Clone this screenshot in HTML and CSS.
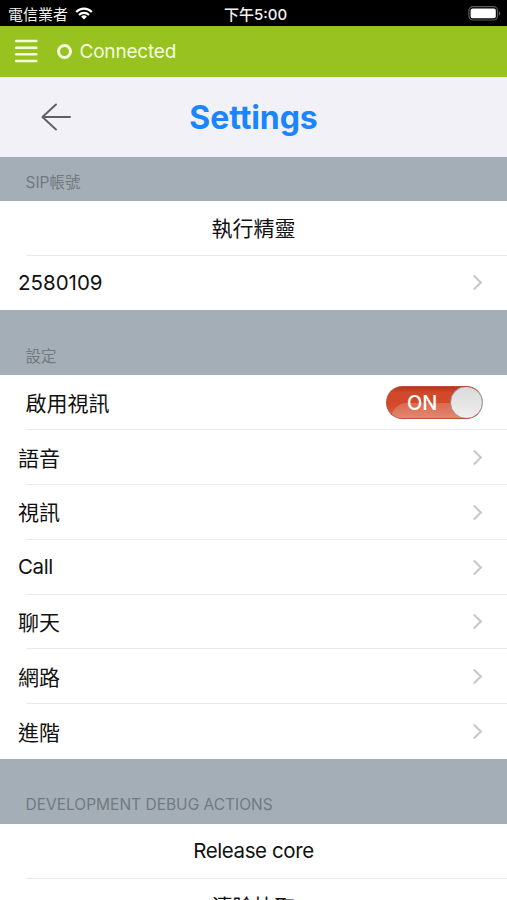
FILE: index.html
```html
<!DOCTYPE html>
<html lang="zh-Hant">
<head>
	<meta charset="UTF-8">
	<meta name="viewport" content="width=device-width, initial-scale=1">
	<title>Settings</title>

	<link rel="stylesheet" href="styles.css">
</head>
<body>

<div class="status-bar">
	<div class="carrier">
		<span>電信業者</span>
		<svg class="wifi" width="18" height="13" viewBox="0 0 18 13">
			<path d="M1.2 4.9a11 11 0 0 1 15.6 0M4 7.9a7.1 7.1 0 0 1 10 0" fill="none" stroke="#fff" stroke-width="2.1"/>
			<path d="M9 12.6 6.1 9.8a4.1 4.1 0 0 1 5.8 0z" fill="#fff"/>
		</svg>
	</div>
	<div class="time">下午5:00</div>
	<svg class="battery" width="33" height="15" viewBox="0 0 33 15">
		<rect x=".9" y=".7" width="28.6" height="13.3" rx="4" fill="none" stroke="#5b5b5d" stroke-width="1.2"/>
		<rect x="2.6" y="2.4" width="25.2" height="9.9" rx="2" fill="#fff"/>
		<path d="M30.8 5.2q1.4.5 1.4 2.2t-1.4 2.2z" fill="#5b5b5d"/>
	</svg>
</div>

<div class="top-bar">
	<svg class="menu" width="24" height="24" viewBox="0 0 24 24">
		<path d="M2 2h20.4M2 8.7h20.4M2 15.3h20.4M2 22h20.4" stroke="#f4ffdc" stroke-width="2.4" stroke-linecap="round"/>
	</svg>
	<span class="led"></span>
	<span class="state">Connected</span>
</div>

<div class="title-bar">
	<svg class="back" width="32" height="28" viewBox="0 0 32 28">
		<path d="M15 1.5 1.4 14 15 26.5M1.6 14h27.4" fill="none" stroke="#606062" stroke-width="1.9" stroke-linecap="round" stroke-linejoin="round"/>
	</svg>
	<h1>Settings</h1>
</div>

<div class="section-head first"><span>SIP帳號</span></div>
<div class="list">
	<div class="row center zh">執行精靈</div>
	<div class="row link"><span>2580109</span><i class="chevron"></i></div>
</div>

<div class="section-head"><span>設定</span></div>
<div class="list">
	<div class="row">
		<span class="zh">啟用視訊</span>
		<div class="switch">
			<span class="switch-label">ON</span>
			<span class="knob"></span>
		</div>
	</div>
	<div class="row link"><span class="zh">語音</span><i class="chevron"></i></div>
	<div class="row link"><span class="zh">視訊</span><i class="chevron"></i></div>
	<div class="row link"><span class="en">Call</span><i class="chevron"></i></div>
	<div class="row link"><span class="zh">聊天</span><i class="chevron"></i></div>
	<div class="row link"><span class="zh">網路</span><i class="chevron"></i></div>
	<div class="row link"><span class="zh">進階</span><i class="chevron"></i></div>
</div>

<div class="section-head debug"><span>DEVELOPMENT DEBUG ACTIONS</span></div>
<div class="list">
	<div class="row center en">Release core</div>
	<div class="row center zh">清除快取</div>
</div>

</body>
</html>
```
FILE: styles.css
```css
* {
	box-sizing: border-box;
}

html, body {
	height: 100%;
	margin: 0;
	overflow: hidden;
}

body {
	display: flex;
	flex-direction: column;
	font-family: Inter, "Noto Sans CJK TC", sans-serif;
	font-size: 20.5px;
	color: #111;
	background: #a4aeb6;
}

body > * {
	flex-shrink: 0;
}

/* status bar */

.status-bar {
	display: grid;
	grid-template-columns: 1fr auto 1fr;
	align-items: center;
	height: 25.5px;
	padding: 0 6px 0 8px;
	background: #000;
	color: #f2f2f2;
	font-size: 15px;
	line-height: 25px;
}

.carrier {
	display: flex;
	align-items: center;
	gap: 7px;
}

.carrier span {
	padding-top: 1px;
}

.time {
	font-weight: 500;
	padding: 2px 0 0 2px;
}

.battery {
	justify-self: end;
}

/* green bar */

.top-bar {
	display: flex;
	align-items: center;
	height: 51.3px;
	padding-left: 14px;
	background: #97c21f;
	color: #f4ffdc;
}

.led {
	width: 15px;
	height: 15px;
	margin: 0 8px 0 18.5px;
	border: 3px solid #f4ffdc;
	border-radius: 50%;
}

.state {
	font-size: 19px;
	letter-spacing: -.2px;
}

.title-bar {
	display: grid;
	grid-template-columns: 1fr auto 1fr;
	align-items: center;
	height: 80px;
	background: #f2f1f7;
}

.back {
	margin-left: 41px;
}

.title-bar h1 {
	margin: 0;
	padding-top: 2px;
	font-size: 32px;
	font-weight: 700;
	line-height: 40px;
	letter-spacing: -.1px;
	color: #1a86fb;
}

/* lists */

.section-head {
	display: flex;
	align-items: flex-end;
	height: 65px;
	padding: 0 25.5px 7px;
	font-size: 15.5px;
	line-height: 22px;
	color: #727980;
}

.section-head.first {
	height: 44px;
}

.section-head.debug {
	padding-bottom: 8px;
}

.list {
	background: #fff;
}

.row {
	position: relative;
	display: flex;
	align-items: center;
	justify-content: space-between;
	height: 54.8px;
	padding: 0 24px 0 25.5px;
	line-height: 30px;
}

.row.link {
	padding-left: 18px;
}

.row.center {
	justify-content: center;
	padding: 0;
}

.zh {
	font-size: 21px;
}

.row.center.zh,
.row .zh {
	padding-top: 2px;
}

.en {
	letter-spacing: -.4px;
}

.row:not(:last-child)::after {
	content: "";
	position: absolute;
	left: 25.5px;
	right: 0;
	bottom: 0;
	height: 1px;
	background: #e9e9eb;
}

.chevron {
	width: 11px;
	height: 11px;
	margin-right: 3px;
	border-top: 2px solid #c7c7cc;
	border-right: 2px solid #c7c7cc;
	transform: rotate(45deg);
}

/* switch */

.switch {
	position: relative;
	width: 97px;
	height: 33px;
	border: 1px solid #b8503a;
	border-right-color: #999;
	border-radius: 17px;
	overflow: hidden;
	background: linear-gradient(#b0381c, #d1482a 18%, #d4492a 60%, #dc6a4e);
}

/* gloss on the lower half */
.switch::before {
	content: "";
	position: absolute;
	left: 4px;
	top: 16px;
	width: 100px;
	height: 30px;
	border-radius: 16px 0 0 0;
	background: rgba(255, 255, 255, .2);
}

.switch-label {
	position: absolute;
	left: 20px;
	top: 1px;
	font-size: 20px;
	font-weight: 500;
	letter-spacing: -.2px;
	color: #fff;
}

.knob {
	position: absolute;
	right: -1px;
	top: -1px;
	width: 33px;
	height: 33px;
	border: 1.5px solid #999;
	border-radius: 50%;
	background: linear-gradient(#dadada, #efefef);
}
```
